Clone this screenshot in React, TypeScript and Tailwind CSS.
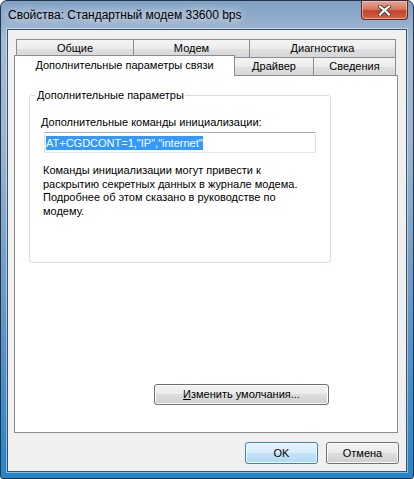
export default function App() {
  const tabBg =
    "bg-[linear-gradient(to_bottom,#f4f4f4_0%,#ececec_50%,#e1e1e1_51%,#d6d6d6_100%)]";
  const btn =
    "rounded-[3px] border border-[#707070] shadow-[inset_0_0_0_1px_#fbfbfb] bg-[linear-gradient(to_bottom,#f2f2f2_0%,#ebebeb_49%,#dddddd_50%,#cfcfcf_100%)] flex items-center justify-center text-[11px] leading-[13px] text-black";
  return (
    <div className="w-[414px] h-[479px] bg-white font-['Liberation_Sans',Arial,sans-serif]">
      <div className="w-[414px] h-[479px] rounded-t-[7px] rounded-b-[3px] border border-[#23344a] bg-[linear-gradient(to_bottom,#7f9fc3_0%,#a3bbd4_8%,#9cb5d0_30%,#5d93c6_70%,#2585c8_100%)] flex flex-col overflow-hidden">
        <div className="h-[28px] flex items-start shrink-0">
          <span className="pl-[7px] text-[12px] leading-[28px] text-black [text-shadow:0_0_8px_rgba(255,255,255,0.95),0_0_14px_rgba(255,255,255,0.8)]">
            Свойства: Стандартный модем 33600 bps
          </span>
          <div className="ml-auto mr-[5px] w-[47px] h-[19px] rounded-b-[4px] border border-t-0 border-[#5a2a22] bg-[linear-gradient(to_bottom,#e8a493_0%,#d47a62_45%,#c4432b_55%,#d0644a_100%)] shadow-[inset_0_0_0_1px_rgba(255,200,190,0.6)] flex items-center justify-center">
            <svg width="13" height="11" viewBox="0 0 13 11">
              <path
                d="M2 1.5 L6.5 5 L11 1.5 M2 9.5 L6.5 5 L11 9.5"
                stroke="#3a3a3a"
                strokeWidth="4"
                strokeLinecap="square"
                fill="none"
              />
              <path
                d="M2 1.5 L6.5 5 L11 1.5 M2 9.5 L6.5 5 L11 9.5"
                stroke="#ffffff"
                strokeWidth="2.2"
                strokeLinecap="square"
                fill="none"
              />
            </svg>
          </div>
        </div>
        <div className="mx-[6px] w-[400px] h-[443px] shrink-0 border border-[#3e5068] bg-[#f0f0f0] shadow-[0_0_0_1px_rgba(255,255,255,0.45)] flex flex-col text-[11px] leading-[13px] text-black">
          <div className="pt-[9px] pl-[6px]">
            <div className="flex h-[18px] ml-[2px]">
              <div className={`w-[117px] h-[18px] border-l border-t border-[#898c95] ${tabBg} flex items-center justify-center`}>
                Общие
              </div>
              <div className={`w-[116px] h-[18px] border-l border-t border-[#898c95] ${tabBg} flex items-center justify-center`}>
                Модем
              </div>
              <div className={`w-[147px] h-[18px] border-l border-t border-r border-[#898c95] ${tabBg} flex items-center justify-center`}>
                Диагностика
              </div>
            </div>
            <div className="flex h-[18px] items-end">
              <div className="relative z-10 w-[221px] h-[21px] -mb-[1px] border-l border-t border-r border-[#898c95] bg-white flex items-center justify-center pb-[1px]">
                Дополнительные параметры связи
              </div>
              <div className={`w-[79px] h-[18px] border-t border-r border-[#898c95] ${tabBg} flex items-center justify-center`}>
                Драйвер
              </div>
              <div className={`w-[82px] h-[18px] border-t border-r border-[#898c95] ${tabBg} flex items-center justify-center`}>
                Сведения
              </div>
            </div>
            <div className="w-[384px] h-[358px] border border-[#898c95] bg-white flex flex-col">
              <div className="relative ml-[14px] mt-[19px] w-[302px] h-[168px] rounded-[3px] border border-[#d5dfe5] flex flex-col">
                <span className="absolute -top-[7px] left-[6px] px-[1px] bg-white whitespace-nowrap">
                  Дополнительные параметры
                </span>
                <div className="mt-[20px] ml-[11px] whitespace-nowrap">
                  <span className="underline">Д</span>ополнительные команды инициализации:
                </div>
                <div className="mt-[3px] ml-[14px] w-[272px] h-[21px] border border-[#abadb3] border-x-[#dbdfe6] border-b-[#e3e9ef] flex items-center">
                  <span className="ml-[1px] bg-[#3399ff] text-white leading-[14px] whitespace-nowrap">
                    AT+CGDCONT=1,"IP","internet"
                  </span>
                </div>
                <div className="mt-[11px] ml-[13px] leading-[13.6px] whitespace-nowrap">
                  <div>Команды инициализации могут привести к</div>
                  <div>раскрытию секретных данных в журнале модема.</div>
                  <div>Подробнее об этом сказано в руководстве по</div>
                  <div>модему.</div>
                </div>
              </div>
              <div className={`mt-[121px] ml-[139px] w-[175px] h-[21px] ${btn}`}>
                <span>
                  <span className="underline">И</span>зменить умолчания...
                </span>
              </div>
            </div>
          </div>
          <div className="mt-[9px] pr-[7px] flex justify-end gap-[8px]">
            <div className="w-[73px] h-[22px] rounded-[3px] border border-[#3c7fb1] shadow-[inset_0_0_0_1px_#f4fbff] bg-[linear-gradient(to_bottom,#e6f3fc_0%,#d6ecfa_49%,#c3e3f8_50%,#b1d9f4_100%)] flex items-center justify-center text-[11px]">
              OK
            </div>
            <div className={`w-[73px] h-[22px] ${btn}`}>Отмена</div>
          </div>
        </div>
      </div>
    </div>
  );
}
